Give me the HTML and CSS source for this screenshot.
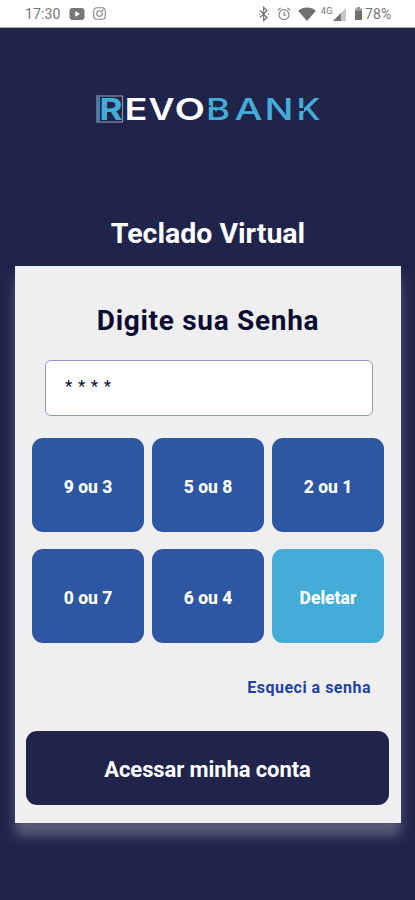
FILE: index.html
```html
<!DOCTYPE html>
<html lang="pt-BR">
<head>
<meta charset="utf-8">
<title>Revobank</title>
<link rel="stylesheet" href="styles.css">
</head>
<body>
<header class="status">
  <span class="time">17:30</span>
  <svg class="youtube" width="16" height="12" viewBox="0 0 16 12"><rect x=".5" width="15" height="12" rx="3" fill="#777"/><path d="M6.2 3.2v5.6L11 6z" fill="#fff"/></svg>
  <svg class="insta" width="13" height="13" viewBox="0 0 13 13" fill="none" stroke="#858585" stroke-width="1.1"><rect x=".7" y=".7" width="11.6" height="11.6" rx="3.3"/><circle cx="6.5" cy="6.5" r="2.8"/><circle cx="9.8" cy="3.2" r=".35"/></svg>
  <svg class="bt" width="12" height="16" viewBox="0 0 12 16" fill="none" stroke="#777" stroke-width="1.3"><path d="M2 4.5l7 7L5.7 14.600V1.400L9 4.500l-7 7"/><path d="M1 8h.9M10 8h.9"/></svg>
  <svg class="alarm" width="14" height="14" viewBox="0 0 14 14" fill="none" stroke="#858585" stroke-width="1.2"><circle cx="7" cy="7.600" r="5"/><path d="M7 4.800v3l2 1.200M1 3.300L3.600 1M13 3.300L10.400 1"/></svg>
  <svg class="wifi" width="18" height="14" viewBox="0 0 18 14"><path d="M0 3.800C5-.7 13-.7 18 3.800L9 14z" fill="#707070"/></svg>
  <span class="net">4G</span>
  <svg class="signal" width="13" height="13" viewBox="0 0 13 13"><path d="M0 13L13 0v13z" fill="#c6c6c6"/><path d="M0 13L8 5v8z" fill="#777"/></svg>
  <svg class="battery" width="7" height="13" viewBox="0 0 7 13"><path d="M2 0h3v1.500h2V13H0V1.500h2z" fill="#999"/><path d="M0 4h7v9H0z" fill="#707070"/></svg>
  <span class="percent">78%</span>
</header>
<main>
  <svg class="logo" width="228" height="34" viewBox="94 92 228 34">
    <rect x="97" y="96" width="25.500" height="26" fill="none" stroke="#8c90a8" stroke-width="1.200"/>
    <path d="M97.500 97h2.500v24h-2.500z" fill="#43add8" opacity=".7"/>
    <g class="wordmark">
      <text class="mark" x="99.500" y="120" textLength="23" lengthAdjust="spacingAndGlyphs">R</text>
      <text class="white" x="124.500" y="120" textLength="23" lengthAdjust="spacingAndGlyphs">E</text>
      <text class="white" x="148.500" y="120" textLength="26" lengthAdjust="spacingAndGlyphs">V</text>
      <text class="white" x="174.500" y="120" textLength="30.500" lengthAdjust="spacingAndGlyphs">O</text>
      <text class="cyan" x="206" y="120" textLength="24" lengthAdjust="spacingAndGlyphs">B</text>
      <text class="cyan" x="234.500" y="120" textLength="28" lengthAdjust="spacingAndGlyphs">A</text>
      <text class="cyan" x="264.500" y="120" textLength="29" lengthAdjust="spacingAndGlyphs">N</text>
      <text class="cyan" x="296.500" y="120" textLength="24" lengthAdjust="spacingAndGlyphs">K</text>
    </g>
    <path d="M207 105.500h4v1.500h-4zM298 108h6v3h-6z" fill="#20244b"/>
    <path d="M216 106.500v5" stroke="#43add8" stroke-width="1.500"/>
  </svg>
  <h1>Teclado Virtual</h1>
  <section class="card">
    <h2>Digite sua Senha</h2>
    <div class="field">****</div>
    <div class="keys">
      <button>9 ou 3</button><button>5 ou 8</button><button>2 ou 1</button>
      <button>0 ou 7</button><button>6 ou 4</button><button class="delete">Deletar</button>
    </div>
    <a class="forgot">Esqueci a senha</a>
    <button class="submit">Acessar minha conta</button>
  </section>
</main>
</body>
</html>
```
FILE: styles.css
```css
* { box-sizing: border-box; }
body { margin: 0; height: 900px; overflow: hidden; background: #20244b; font-family: Roboto, sans-serif; }
.status { height: 28px; background: #fff; border-bottom: 1px solid #aaaab5; display: flex; align-items: center; color: #757575; font-size: 14px; padding-left: 25px; letter-spacing: .1px; }
.status svg { flex: none; }
.time { width: 37px; margin-right: 7px; }
.insta { margin-left: 8px; }
.bt { margin-left: 152px; }
.alarm { margin-left: 7px; }
.wifi { margin-left: 7px; }
.net { font-size: 9px; margin: -6px 0 0 5px; width: 12px; }
.signal { margin: 2px 0 0 0; }
.battery { margin-left: 9px; }
.percent { margin-left: 3px; }
main { display: flex; flex-direction: column; align-items: center; }
.logo { margin-top: 64px; }
.wordmark { font-family: Inter, sans-serif; font-size: 30px; }
.white { fill: #fff; font-weight: 600; }
.cyan { fill: #43add8; font-weight: 500; }
.mark { fill: #43add8; font-weight: 700; }
h1, h2 { margin: 0; font-weight: 700; line-height: 34px; white-space: nowrap; }
h1 { color: #fff; font-size: 28.500px; margin-top: 91px; padding-left: 1px; }
.card { width: 386px; height: 557px; margin-top: 15px; margin-right: -1px; background: #efefef; box-shadow: 0 13px 11px 0 rgba(255,255,255,.25); display: flex; flex-direction: column; align-items: center; }
h2 { color: #0c0b33; font-size: 28px; letter-spacing: .7px; margin-top: 38px; }
.field { width: 328px; height: 56px; margin: 22px 0 0 2px; border: 1px solid #8e98c5; border-radius: 6px; background: #fff; padding: 14px 19px; color: #0c0b33; font-size: 17px; line-height: 22px; letter-spacing: 5.600px; }
.keys { margin-top: 22px; width: 352px; display: grid; grid-template-columns: repeat(3, 112px); gap: 17px 8px; }
button { font-family: Roboto, sans-serif; font-weight: 700; color: #fff; border: 0; padding: 0; }
.keys button { height: 94px; border-radius: 11px; background: #2d57a2; font-size: 17.500px; padding-top: 4px; font-weight: 800; }
.keys .delete { background: #43add8; }
.forgot { align-self: flex-end; margin: 33px 30px 0 0; color: #1f439d; font-size: 16px; font-weight: 700; line-height: 24px; letter-spacing: .5px; }
.submit { width: 363px; height: 74px; margin: 31px 1px 0 0; padding-top: 2px; border-radius: 11px; background: #20244b; font-size: 22px; letter-spacing: -.1px; }
```
